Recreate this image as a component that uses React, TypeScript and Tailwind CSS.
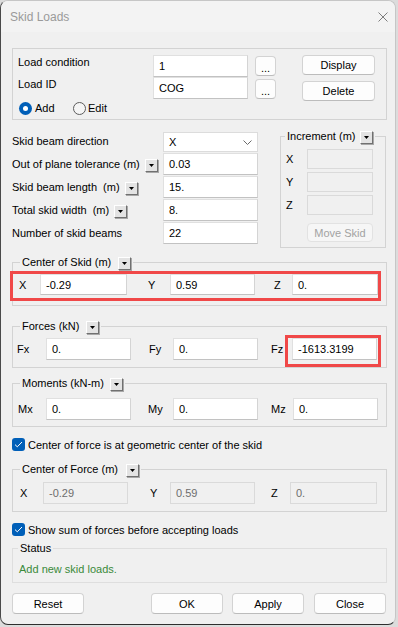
import React from 'react';

// shared boxes
const EDIT = 'bg-white border border-[#e0e0e0] border-b-[#c2c2c2] border-r-[#d4d4d4] text-black';
const EDIT_OFF = 'bg-[#f0f0f0] border border-[#dadada] text-[#6d6d6d]';
const BTN = 'flex items-center justify-center rounded-[4px] bg-[#fdfdfd] border border-[#d3d3d3] border-b-[#bcbcbc] text-black';
const GROUP = 'border border-[#d3d3d3] w-[375px]';

function Drop() {
  return (
    <span className="inline-flex w-[13px] h-[13px] items-center justify-center bg-[#e3e3e3] border border-t-white border-l-white border-r-[#707070] border-b-[#707070] shadow-[1px_1px_0_#a8a8a8]">
      <svg width="5" height="3" viewBox="0 0 5 3">
        <path d="M0 0h5L2.5 3z" fill="#000" />
      </svg>
    </span>
  );
}

function Edit({ cls, value, off = false }: { cls: string; value: string; off?: boolean }) {
  return <div className={`${off ? EDIT_OFF : EDIT} ${cls} flex items-center pl-[5px]`}>{value}</div>;
}

function Legend({ text, gap, left = 'ml-[7px]' }: { text: string; gap: string; left?: string }) {
  return (
    <legend className={`${left} px-[2px]`}>
      <span className="flex items-center h-[14px]">
        <span>{text}</span>
        <span className={gap}>
          <Drop />
        </span>
      </span>
    </legend>
  );
}

function Check({ label }: { label: string }) {
  return (
    <div className="flex items-center h-[13px]">
      <span className="w-[13px] h-[13px] rounded-[3px] bg-[#005fb8] flex items-center justify-center">
        <svg width="9" height="7" viewBox="0 0 9 7">
          <path d="M1 3.6L3.3 5.8L8 1" stroke="#fff" strokeWidth="1" fill="none" />
        </svg>
      </span>
      <span className="ml-[3px]">{label}</span>
    </div>
  );
}

export default function App() {
  return (
    <div className="w-[398px] h-[627px] bg-[#dcdcdc] font-['Liberation_Sans',Arial,sans-serif] text-[11px] leading-[14px] text-black">
      <div className="w-[396px] h-[625px] rounded-[8px] border border-[#c6c6c6] border-l-[#4a4a4a] border-b-[#2e2e2e] bg-[#f0f0f0] overflow-hidden flex flex-col">
        {/* Title bar */}
        <div className="h-[31px] shrink-0 bg-[#f3f3f3] flex items-center justify-between pl-[9px] pr-[7px]">
          <span className="text-[12px] text-[#9a9a9a]">Skid Loads</span>
          <svg width="10" height="10" viewBox="0 0 10 10">
            <path d="M0.5 0.5L9.5 9.5M9.5 0.5L0.5 9.5" stroke="#7c7c7c" strokeWidth="1" />
          </svg>
        </div>

        <div className="flex flex-col pl-[11px] pt-[16px]">
          {/* Load condition group */}
          <fieldset className={`${GROUP} pt-[6px] pl-[5px] pb-[3px]`}>
            <div className="flex items-start h-[22px]">
              <span className="w-[135px] self-center mb-[8px]">Load condition</span>
              <Edit cls="w-[95px] h-[22px] border-b-[#8a8a8a]" value="1" />
              <div className={`${BTN} ml-[7px] mt-[1px] w-[21px] h-[20px] pt-[3px]`}>...</div>
              <div className={`${BTN} ml-[26px] w-[73px] h-[20px]`}>Display</div>
            </div>
            <div className="flex items-start h-[22px]">
              <span className="w-[135px] self-center mb-[8px]">Load ID</span>
              <Edit cls="w-[95px] h-[22px] border-b-[#8a8a8a]" value="COG" />
              <div className={`${BTN} ml-[7px] mt-[2px] w-[21px] h-[20px] pt-[3px]`}>...</div>
              <div className={`${BTN} ml-[26px] mt-[4px] w-[73px] h-[20px]`}>Delete</div>
            </div>
            <div className="flex items-center h-[16px] mt-[1px] pl-[1px]">
              <div className="flex items-center w-[54px]">
                <span className="w-[13px] h-[13px] rounded-full bg-[#005fb8] flex items-center justify-center">
                  <span className="w-[5px] h-[5px] rounded-full bg-white" />
                </span>
                <span className="ml-[3px]">Add</span>
              </div>
              <span className="w-[13px] h-[13px] rounded-full border border-[#5c5c5c] bg-[#f5f5f5]" />
              <span className="ml-[2px]">Edit</span>
            </div>
          </fieldset>

          {/* Skid beam settings */}
          <div className="flex items-start mt-[12px]">
            <div className="flex flex-col w-[251px]">
              <div className="flex items-center h-[20px]">
                <span className="w-[151px] mb-[3px]">Skid beam direction</span>
                <div className="w-[95px] h-[20px] bg-white border border-[#dcdcdc] flex items-center justify-between pl-[5px] pr-[5px]">
                  <span>X</span>
                  <svg width="9" height="5" viewBox="0 0 9 5">
                    <path d="M0.5 0.5L4.5 4.5L8.5 0.5" stroke="#6a6a6a" fill="none" />
                  </svg>
                </div>
              </div>
              <div className="flex items-center h-[22px] mt-[1px]">
                <span className="w-[151px] flex items-center">
                  Out of plane tolerance (m)
                  <span className="ml-[5px]">
                    <Drop />
                  </span>
                </span>
                <Edit cls="w-[95px] h-[22px]" value="0.03" />
              </div>
              <div className="flex items-center h-[22px] mt-[1px]">
                <span className="w-[151px] flex items-center">
                  Skid beam length&nbsp;&nbsp;(m)
                  <span className="ml-[5px]">
                    <Drop />
                  </span>
                </span>
                <Edit cls="w-[95px] h-[22px]" value="15." />
              </div>
              <div className="flex items-center h-[22px] mt-[1px]">
                <span className="w-[151px] flex items-center">
                  Total skid width&nbsp;&nbsp;(m)
                  <span className="ml-[5px]">
                    <Drop />
                  </span>
                </span>
                <Edit cls="w-[95px] h-[22px]" value="8." />
              </div>
              <div className="flex items-center h-[22px] mt-[1px]">
                <span className="w-[151px]">Number of skid beams</span>
                <Edit cls="w-[95px] h-[22px]" value="22" />
              </div>
            </div>

            <fieldset className="border border-[#d3d3d3] w-[106px] ml-[17px] mt-[-3px] pt-[6px] pb-[5px]">
              <Legend text="Increment (m)" gap="ml-[5px]" left="ml-[4px]" />
              {['X', 'Y', 'Z'].map((a, i) => (
                <div key={a} className={`flex items-center h-[20px] ${i ? 'mt-[3px]' : ''}`}>
                  <span className="w-[26px] pl-[5px]">{a}</span>
                  <div className={`${EDIT_OFF} w-[66px] h-[20px]`} />
                </div>
              ))}
              <div className="ml-[26px] mt-[8px] w-[66px] h-[19px] rounded-[4px] bg-[#f6f6f6] border border-[#e2e2e2] text-[#a2a2a2] flex items-center justify-center">
                Move Skid
              </div>
            </fieldset>
          </div>

          {/* Center of Skid */}
          <fieldset className={`${GROUP} mt-[7px] pt-[2px] pb-[4px]`}>
            <Legend text="Center of Skid (m)" gap="ml-[7px]" />
            <div className="-ml-[3px] w-[371px] h-[30px] border-[3px] border-[#f04848] flex items-start">
              <span className="w-[27px] pl-[6px] h-[21px] flex items-center">X</span>
              <Edit cls="w-[87px] h-[21px]" value="-0.29" />
              <span className="w-[43px] pl-[21px] h-[21px] flex items-center">Y</span>
              <Edit cls="w-[85px] h-[21px]" value="0.59" />
              <span className="w-[37px] pl-[19px] h-[21px] flex items-center">Z</span>
              <Edit cls="w-[86px] h-[21px]" value="0." />
            </div>
          </fieldset>

          {/* Forces */}
          <fieldset className={`${GROUP} mt-[13px]`}>
            <Legend text="Forces (kN)" gap="ml-[7px]" />
            <div className="flex items-start">
              <span className="w-[33px] pl-[4px] mt-[5px] h-[22px] flex items-center">Fx</span>
              <Edit cls="w-[85px] h-[22px] mt-[5px]" value="0." />
              <span className="w-[42px] pl-[18px] mt-[5px] h-[22px] flex items-center">Fy</span>
              <Edit cls="w-[85px] h-[22px] mt-[5px]" value="0." />
              <span className="w-[27px] pl-[13px] mt-[5px] h-[22px] flex items-center">Fz</span>
              <div className="mt-[2px] w-[96px] h-[32px] border-[3px] border-[#f04848] pl-[4px]">
                <Edit cls="w-[85px] h-[22px]" value="-1613.3199" />
              </div>
            </div>
          </fieldset>

          {/* Moments */}
          <fieldset className={`${GROUP} mt-[8px] pt-[8px] pb-[6px]`}>
            <Legend text="Moments (kN-m)" gap="ml-[6px]" />
            <div className="flex items-center">
              <span className="w-[33px] pl-[5px]">Mx</span>
              <Edit cls="w-[85px] h-[22px]" value="0." />
              <span className="w-[42px] pl-[17px]">My</span>
              <Edit cls="w-[85px] h-[22px]" value="0." />
              <span className="w-[35px] pl-[13px]">Mz</span>
              <Edit cls="w-[85px] h-[22px]" value="0." />
            </div>
          </fieldset>

          <div className="mt-[11px]">
            <Check label="Center of force is at geometric center of the skid" />
          </div>

          {/* Center of Force */}
          <fieldset className={`${GROUP} mt-[11px] pt-[6px] pb-[7px]`}>
            <Legend text="Center of Force (m)" gap="ml-[8px]" />
            <div className="flex items-center">
              <span className="w-[30px] pl-[7px]">X</span>
              <Edit off cls="w-[85px] h-[22px]" value="-0.29" />
              <span className="w-[42px] pl-[22px]">Y</span>
              <Edit off cls="w-[85px] h-[22px]" value="0.59" />
              <span className="w-[35px] pl-[16px]">Z</span>
              <Edit off cls="w-[87px] h-[22px]" value="0." />
            </div>
          </fieldset>

          <div className="mt-[11px]">
            <Check label="Show sum of forces before accepting loads" />
          </div>

          {/* Status */}
          <fieldset className="border border-[#dedede] w-[375px] mt-[5px] pt-[7px] pb-[6px] pl-[6px]">
            <legend className="ml-[-1px] px-[2px] h-[14px]">Status</legend>
            <span className="text-[#3a8a3a]">Add new skid loads.</span>
          </fieldset>

          {/* Dialog buttons */}
          <div className="flex mt-[10px]">
            <div className={`${BTN} w-[72px] h-[21px]`}>Reset</div>
            <div className={`${BTN} w-[72px] h-[21px] ml-[67px]`}>OK</div>
            <div className={`${BTN} w-[72px] h-[21px] ml-[9px]`}>Apply</div>
            <div className={`${BTN} w-[72px] h-[21px] ml-[10px]`}>Close</div>
          </div>
        </div>
      </div>
    </div>
  );
}
